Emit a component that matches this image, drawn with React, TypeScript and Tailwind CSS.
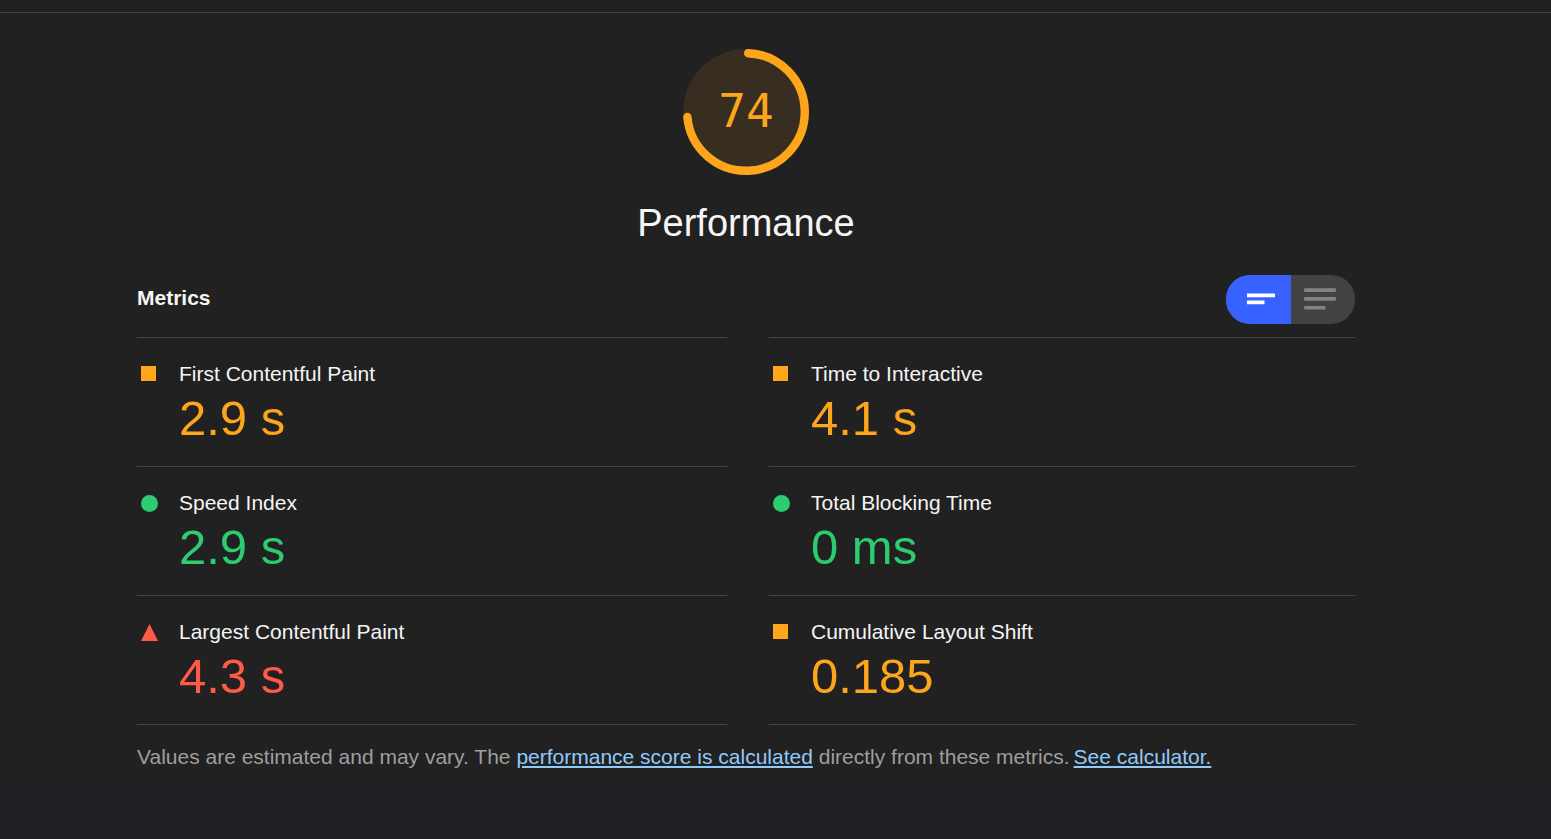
import { useState } from "react";

type Rating = "pass" | "average" | "fail";

interface Metric {
  name: string;
  value: string;
  rating: Rating;
}

const leftMetrics: Metric[] = [
  { name: "First Contentful Paint", value: "2.9 s", rating: "average" },
  { name: "Speed Index", value: "2.9 s", rating: "pass" },
  { name: "Largest Contentful Paint", value: "4.3 s", rating: "fail" },
];

const rightMetrics: Metric[] = [
  { name: "Time to Interactive", value: "4.1 s", rating: "average" },
  { name: "Total Blocking Time", value: "0 ms", rating: "pass" },
  { name: "Cumulative Layout Shift", value: "0.185", rating: "average" },
];

const valueColor: Record<Rating, string> = {
  pass: "text-[#2ecc71]",
  average: "text-[#fda61b]",
  fail: "text-[#ff5a47]",
};

function RatingIcon({ rating }: { rating: Rating }) {
  return (
    <svg viewBox="0 0 17 17" className="h-[17px] w-[17px]" aria-hidden="true">
      {rating === "average" && <rect width="15" height="15" fill="#fda61b" />}
      {rating === "pass" && <circle cx="8.5" cy="8.5" r="8.5" fill="#2ecc71" />}
      {rating === "fail" && <path d="M8.5 0 17 17H0Z" fill="#ff5a47" />}
    </svg>
  );
}

function MetricRow({ metric }: { metric: Metric }) {
  return (
    <li className="border-t border-[#424242] py-5 last:border-b">
      <div className="flex items-center pl-1 leading-8">
        <span className="w-[38px]">
          <RatingIcon rating={metric.rating} />
        </span>
        <span>{metric.name}</span>
      </div>
      <div className={`pl-[42px] text-[49px] leading-14 ${valueColor[metric.rating]}`}>
        {metric.value}
      </div>
    </li>
  );
}

function MetricColumn({ metrics }: { metrics: Metric[] }) {
  return (
    <ul>
      {metrics.map((metric) => (
        <MetricRow key={metric.name} metric={metric} />
      ))}
    </ul>
  );
}

function Gauge() {
  return (
    <div className="grid h-[126px] w-[126px] place-items-center">
      <svg viewBox="0 0 126 126" className="col-start-1 row-start-1 h-full w-full" aria-hidden="true">
        <circle cx="63" cy="63" r="63" fill="#372d20" />
        <path
          d="M65.2 4.2A58.8 58.8 0 1 1 4.4 68"
          fill="none"
          stroke="#fda61b"
          strokeWidth="8.4"
          strokeLinecap="round"
        />
      </svg>
      <span className="col-start-1 row-start-1 pb-0.5 font-['DejaVu_Sans_Mono',monospace] text-[46px] leading-none text-[#fda61b]">
        74
      </span>
    </div>
  );
}

function ViewToggle() {
  const [view, setView] = useState("simple");
  return (
    <fieldset className="flex h-[49px] w-[129px] overflow-hidden rounded-3xl bg-[#424242] text-[#828282]">
      <label className="flex w-[65px] cursor-pointer items-center has-checked:bg-[#3862ff] has-checked:text-white">
        <input
          type="radio"
          name="view"
          aria-label="Simple view"
          className="sr-only"
          checked={view === "simple"}
          onChange={() => setView("simple")}
        />
        <svg viewBox="0 0 65 49" className="h-full w-full" fill="currentColor" aria-hidden="true">
          <path d="M21 18.5h28v3.7H21zM21 25.5h17.5v3.7H21z" />
        </svg>
      </label>
      <label className="flex w-16 cursor-pointer items-center has-checked:bg-[#3862ff] has-checked:text-white">
        <input
          type="radio"
          name="view"
          aria-label="Detailed view"
          className="sr-only"
          checked={view === "detailed"}
          onChange={() => setView("detailed")}
        />
        <svg viewBox="0 0 64 49" className="h-full w-full" fill="currentColor" aria-hidden="true">
          <path d="M13.2 13.3h31.6v3.6H13.2zM13.2 22.1h31.6v3.6H13.2zM13.2 30.9h21.3v3.6H13.2z" />
        </svg>
      </label>
    </fieldset>
  );
}

export default function App() {
  return (
    <div className="min-h-screen bg-[#202124] font-['Liberation_Sans',Arial,sans-serif] text-[21px] text-[#f5f5f5]">
      <main className="bg-[#212121] pt-3">
        <div className="border-t border-[#424242] pt-9 pr-[59px]">
          <section className="mx-auto max-w-[1218px]">
            <header className="flex flex-col items-center">
              <Gauge />
              <h1 className="mt-6 text-[38px] leading-12">Performance</h1>
            </header>
            <div className="mt-7 flex items-start justify-between">
              <h2 className="leading-[46px] font-bold">Metrics</h2>
              <ViewToggle />
            </div>
            <div className="mt-[13px] grid grid-cols-[590fr_586fr] gap-x-[42px]">
              <MetricColumn metrics={leftMetrics} />
              <MetricColumn metrics={rightMetrics} />
            </div>
            <p className="pt-4 pb-[3px] leading-8 text-[#9e9e9e]">
              Values are estimated and may vary. The{" "}
              <a href="#scoring" className="text-[#90caf9] underline">
                performance score is calculated
              </a>{" "}
              directly from these metrics.
              <a href="#calculator" className="ml-1 text-[#90caf9] underline">
                See calculator.
              </a>
            </p>
          </section>
        </div>
      </main>
    </div>
  );
}
